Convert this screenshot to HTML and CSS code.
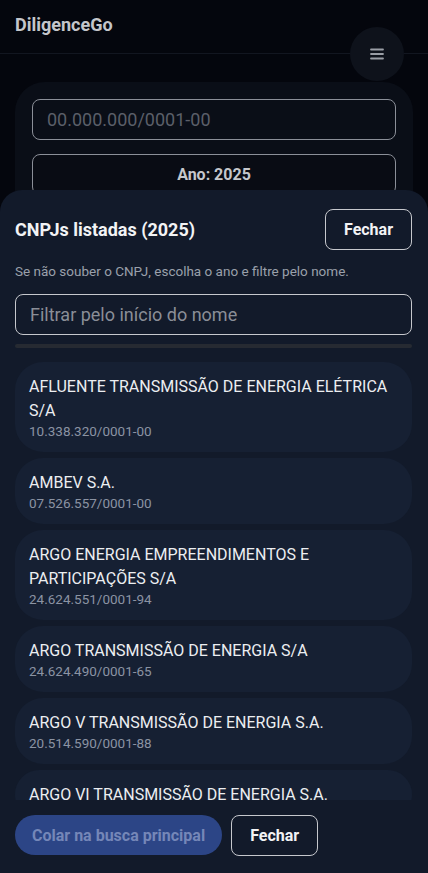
FILE: index.html
```html
<!DOCTYPE html>
<html lang="pt-BR">
<head>
    <meta charset="UTF-8">
    <meta name="viewport" content="width=device-width, initial-scale=1.0">
    <title>DiligenceGo</title>
    <link rel="stylesheet" href="styles.css">
</head>
<body>
    <header class="topbar">
        <span class="brand">DiligenceGo</span>
    </header>
    <button class="menu-btn" aria-label="Menu">
        <svg width="14" height="12" viewBox="0 0 14 12">
            <path d="M1 1.5h12M1 6h12M1 10.5h12" stroke="#9a9ea6" stroke-width="1.8" stroke-linecap="round"/>
        </svg>
    </button>

    <main class="search-card">
        <input class="field" type="text" placeholder="00.000.000/0001-00">
        <button class="year-btn">Ano: 2025</button>
    </main>

    <section class="sheet">
        <div class="sheet-head">
            <div class="sheet-title-row">
                <h2 class="sheet-title">CNPJs listadas (2025)</h2>
                <button class="outline-btn">Fechar</button>
            </div>
            <p class="hint">Se não souber o CNPJ, escolha o ano e filtre pelo nome.</p>
            <input class="field filter" type="text" placeholder="Filtrar pelo início do nome">
            <div class="progress"></div>
        </div>

        <ul class="company-list">
            <li class="company">
                <span class="company-name">AFLUENTE TRANSMISSÃO DE ENERGIA ELÉTRICA S/A</span>
                <span class="company-cnpj">10.338.320/0001-00</span>
            </li>
            <li class="company">
                <span class="company-name">AMBEV S.A.</span>
                <span class="company-cnpj">07.526.557/0001-00</span>
            </li>
            <li class="company">
                <span class="company-name">ARGO ENERGIA EMPREENDIMENTOS E PARTICIPAÇÕES S/A</span>
                <span class="company-cnpj">24.624.551/0001-94</span>
            </li>
            <li class="company">
                <span class="company-name">ARGO TRANSMISSÃO DE ENERGIA S/A</span>
                <span class="company-cnpj">24.624.490/0001-65</span>
            </li>
            <li class="company">
                <span class="company-name">ARGO V TRANSMISSÃO DE ENERGIA S.A.</span>
                <span class="company-cnpj">20.514.590/0001-88</span>
            </li>
            <li class="company">
                <span class="company-name">ARGO VI TRANSMISSÃO DE ENERGIA S.A.</span>
            </li>
        </ul>

        <div class="sheet-foot">
            <button class="primary-btn" disabled>Colar na busca principal</button>
            <button class="outline-btn">Fechar</button>
        </div>
    </section>
</body>
</html>
```

FILE: styles.css
```css
* {
    box-sizing: border-box;
}
html, body {
    height: 100%;
}
body {
    margin: 0;
    font-family: Roboto, "Noto Sans", Arial, sans-serif;
    background-color: #04060d;
    color: #e6e8ec;
    overflow: hidden;
}
.topbar {
    height: 54px;
    padding: 14px 15px 0;
    border-bottom: 1px solid #121620;
}
.brand {
    font-size: 18px;
    font-weight: 700;
    color: #c4c6cb;
}
.menu-btn {
    position: absolute;
    top: 27px;
    left: 350px;
    width: 54px;
    height: 54px;
    border-radius: 50%;
    border: none;
    background: #0e121b;
    display: flex;
    align-items: center;
    justify-content: center;
    padding: 0;
}
.search-card {
    margin: 28px 15px 0;
    padding: 17px 17px;
    background: #0a0e17;
    border-radius: 30px;
    display: flex;
    flex-direction: column;
    gap: 14px;
    height: 200px;
}
.field {
    width: 100%;
    height: 41px;
    padding: 0 14px;
    font-family: inherit;
    font-size: 18px;
    color: #e6e8ec;
    background: transparent;
    border: 1px solid #8b8f98;
    border-radius: 8px;
    outline: none;
}
.field::placeholder {
    color: #5b5f69;
}
.year-btn {
    height: 41px;
    font-family: inherit;
    font-size: 16px;
    font-weight: 700;
    color: #c5c7cc;
    background: #090c14;
    border: 1px solid #8b8f98;
    border-radius: 8px;
}
.sheet {
    position: absolute;
    left: 0;
    right: 0;
    top: 190px;
    bottom: 0;
    background: #121a2a;
    border-radius: 22px 22px 0 0;
    display: flex;
    flex-direction: column;
}
.sheet-head {
    padding: 19px 16px 0 15px;
}
.sheet-title-row {
    display: flex;
    align-items: center;
    justify-content: space-between;
}
.sheet-title {
    margin: 0;
    font-size: 18px;
    font-weight: 700;
    color: #f2f3f5;
}
.outline-btn {
    height: 41px;
    padding: 0 18px;
    font-family: inherit;
    font-size: 16px;
    font-weight: 700;
    color: #f2f3f5;
    background: transparent;
    border: 1px solid #c6c8cd;
    border-radius: 8px;
}
.hint {
    margin: 13px 0 15px;
    font-size: 13.5px;
    color: #9aa0ab;
}
.filter {
    border-color: #c6c8cd;
}
.filter::placeholder {
    color: #8a8e97;
}
.progress {
    height: 4px;
    margin-top: 9px;
    background: #262a32;
    border-radius: 2px;
}
.company-list {
    list-style: none;
    margin: 0;
    padding: 14px 16px 0 15px;
    flex: 1;
    overflow: hidden;
    display: flex;
    flex-direction: column;
    gap: 6px;
}
.company {
    flex-shrink: 0;
    padding: 13px 14px 12px;
    background: #162033;
    border-radius: 28px;
    display: flex;
    flex-direction: column;
}
.company-name {
    font-size: 16px;
    line-height: 24px;
    color: #eceef1;
}
.company-cnpj {
    font-size: 13.5px;
    line-height: 17px;
    color: #8b93a3;
}
.sheet-foot {
    height: 73px;
    padding: 15px 15px 0;
    display: flex;
    gap: 9px;
    align-items: flex-start;
    background: #121a2a;
}
.primary-btn {
    height: 40px;
    padding: 0 17px;
    font-family: inherit;
    font-size: 16px;
    font-weight: 700;
    color: #7587b8;
    background: #2c4586;
    border: none;
    border-radius: 20px;
}
```
